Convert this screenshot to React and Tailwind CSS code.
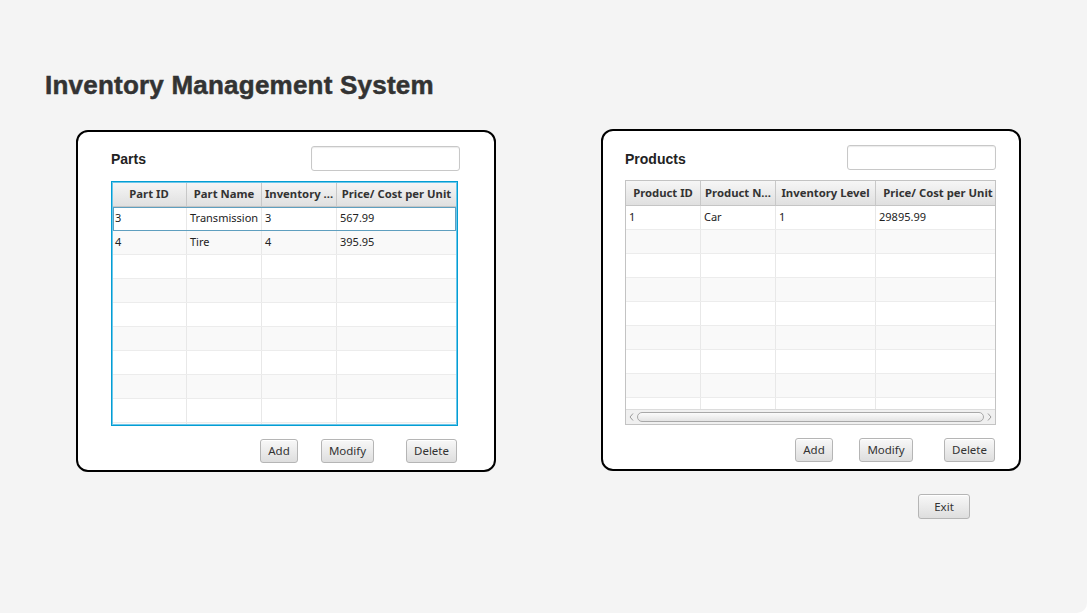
import React from "react";

const font = { fontFamily: '"Noto Sans", "Segoe UI", sans-serif' };

function Btn({ children, w, className = "" }) {
  return (
    <div
      className={`h-[24px] ${w} ${className} flex items-center justify-center rounded-[3px] border border-[#b5b5b5] bg-gradient-to-b from-[#f8f8f8] to-[#dedede] text-[11.5px] text-[#333] shadow-[inset_0_1px_0_#ffffff]`}
      style={font}
    >
      {children}
    </div>
  );
}

function Table({ cols, rows, focused, scrollbar, width }) {
  const bodyRows = scrollbar ? 9 : 10;
  const all = [];
  for (let i = 0; i < bodyRows; i++) all.push(rows[i] || null);
  return (
    <div
      className={`mt-[10px] ${width} h-[245px] border ${focused ? "border-[#039ed3]" : "border-[#c3c3c3]"} bg-white overflow-hidden flex flex-col relative`}
      style={font}
    >
      <div className="flex h-[25px] shrink-0 border-b border-[#c5c5c5] bg-gradient-to-b from-[#f6f6f6] to-[#e0e0e0]">
        {cols.map((c, i) => (
          <div
            key={i}
            className={`${c.w} shrink-0 h-full flex items-center justify-center border-r border-[#c8c8c8] text-[11.3px] font-bold text-[#333] whitespace-nowrap overflow-hidden`}
          >
            {c.label}
          </div>
        ))}
      </div>
      <div className="flex-1 overflow-hidden">
        {all.map((r, ri) => (
          <div
            key={ri}
            className={`relative flex h-[24px] border-b border-[#ececec] ${ri % 2 === 0 ? "bg-white" : "bg-[#f9f9f9]"}`}
          >
            {cols.map((c, ci) => (
              <div
                key={ci}
                className={`${c.w} shrink-0 h-full flex items-center pl-[3px] border-r border-[#e8e8e8] text-[11px] text-[#222] whitespace-nowrap overflow-hidden`}
              >
                {r ? r[ci] : ""}
              </div>
            ))}
            {focused && ri === 0 && (
              <div className="absolute inset-x-[1px] top-0 bottom-[-1px] border border-[#5f9fbf] pointer-events-none" />
            )}
          </div>
        ))}
      </div>
      {scrollbar && (
        <div className="h-[15px] shrink-0 flex items-center border-t border-[#dcdcdc] bg-[#f0f0f0]">
          <div className="w-[11px] flex items-center justify-center">
            <svg width="5" height="8" viewBox="0 0 5 8">
              <path d="M4 0.5 L1 4 L4 7.5" fill="none" stroke="#9a9a9a" strokeWidth="1" />
            </svg>
          </div>
          <div className="flex-1 h-[10px] rounded-full border border-[#a8a8a8] bg-gradient-to-b from-[#fbfbfb] to-[#e4e4e4]" />
          <div className="w-[11px] flex items-center justify-center">
            <svg width="5" height="8" viewBox="0 0 5 8">
              <path d="M1 0.5 L4 4 L1 7.5" fill="none" stroke="#9a9a9a" strokeWidth="1" />
            </svg>
          </div>
        </div>
      )}
      {focused && (
        <div className="absolute inset-0 border border-[#6cc6ea] pointer-events-none" />
      )}
    </div>
  );
}

function Search() {
  return (
    <div className="w-[149px] h-[25px] rounded-[3px] border border-[#c8c8c8] bg-white shadow-[inset_0_1px_1px_#ececec]" />
  );
}

export default function App() {
  const labelFont = { fontFamily: '"Liberation Sans", Arial, sans-serif' };
  return (
    <div className="w-[1087px] h-[613px] bg-[#f4f4f4] rounded-br-[10px] pt-[70px] pl-[45px]">
      <h1
        className="text-[26px] leading-[30px] font-bold tracking-[0.22px] text-[#333333] [-webkit-text-stroke:0.5px_#333333]"
        style={labelFont}
      >
        Inventory Management System
      </h1>
      <div className="flex mt-[30px] ml-[31px] gap-[105px]">
        {/* Parts panel */}
        <div className="w-[420px] h-[342px] border-2 border-black rounded-[12px] bg-white pt-[14px] pl-[33px] pr-[34px]">
          <div className="flex h-[25px] items-center justify-between">
            <div className="text-[14px] font-bold text-[#222] pt-[2px]" style={labelFont}>
              Parts
            </div>
            <Search />
          </div>
          <Table
            width="w-[347px]"
            focused
            cols={[
              { label: "Part ID", w: "w-[75px]" },
              { label: "Part Name", w: "w-[75px]" },
              { label: "Inventory ...", w: "w-[75px]" },
              { label: "Price/ Cost per Unit", w: "w-[120px]" },
            ]}
            rows={[
              ["3", "Transmission", "3", "567.99"],
              ["4", "Tire", "4", "395.95"],
            ]}
          />
          <div className="flex mt-[13px]">
            <Btn w="w-[38px]" className="ml-[149px]">Add</Btn>
            <Btn w="w-[53px]" className="ml-[23px]">Modify</Btn>
            <Btn w="w-[51px]" className="ml-[32px]">Delete</Btn>
          </div>
        </div>
        {/* Products panel */}
        <div className="w-[420px] h-[342px] border-2 border-black rounded-[12px] bg-white pt-[14px] pl-[22px] pr-[23px] -mt-[1px]">
          <div className="flex h-[25px] items-center justify-between">
            <div className="text-[14px] font-bold text-[#222] pt-[3px]" style={labelFont}>
              Products
            </div>
            <Search />
          </div>
          <Table
            width="w-[371px]"
            scrollbar
            cols={[
              { label: "Product ID", w: "w-[75px]" },
              { label: "Product N...", w: "w-[75px]" },
              { label: "Inventory Level", w: "w-[100px]" },
              { label: "Price/ Cost per Unit", w: "w-[125px]" },
            ]}
            rows={[["1", "Car", "1", "29895.99"]]}
          />
          <div className="flex mt-[13px]">
            <Btn w="w-[38px]" className="ml-[170px]">Add</Btn>
            <Btn w="w-[54px]" className="ml-[26px]">Modify</Btn>
            <Btn w="w-[51px]" className="ml-[31px]">Delete</Btn>
          </div>
        </div>
      </div>
      <div className="flex mt-[22px] ml-[873px]">
        <Btn w="w-[52px]" className="h-[25px]">Exit</Btn>
      </div>
    </div>
  );
}
